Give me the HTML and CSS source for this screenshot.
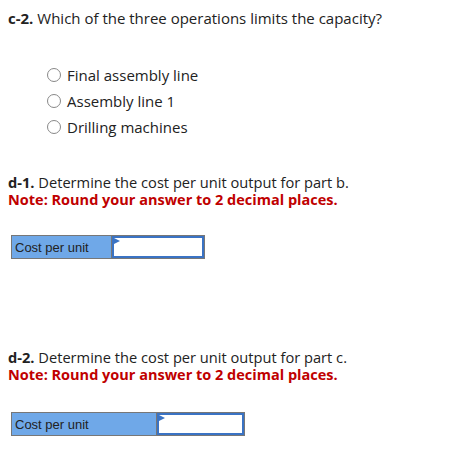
FILE: index.html
```html
<!DOCTYPE html>
<html>
<head>
<meta charset="utf-8">
<link rel="stylesheet" href="styles.css">
</head>
<body>
<div class="q">
  <p class="prompt"><b>c-2.</b> Which of the three operations limits the capacity?</p>
  <ul class="choices">
    <li><span class="radio"></span>Final assembly line</li>
    <li><span class="radio"></span>Assembly line 1</li>
    <li><span class="radio"></span>Drilling machines</li>
  </ul>
</div>
<div class="q q-d1">
  <p class="prompt"><b>d-1.</b> Determine the cost per unit output for part b.</p>
  <p class="note">Note: Round your answer to 2 decimal places.</p>
  <div class="answer a1">
    <div class="label">Cost per unit</div>
    <div class="input"><span class="flag"></span></div>
  </div>
</div>
<div class="q q-d2">
  <p class="prompt"><b>d-2.</b> Determine the cost per unit output for part c.</p>
  <p class="note">Note: Round your answer to 2 decimal places.</p>
  <div class="answer a2">
    <div class="label">Cost per unit</div>
    <div class="input"><span class="flag"></span></div>
  </div>
</div>
</body>
</html>
```
FILE: styles.css
```css
body {
  margin: 0;
  padding: 8px 0 0 8px;
  font-family: "Open Sans", "Liberation Sans", sans-serif;
  font-size: 15px;
  color: #222;
}
p { margin: 0; }
.prompt { line-height: 20px; }
.prompt b { font-weight: 700; }
.choices {
  list-style: none;
  margin: 0;
  padding: 34px 0 0 39px;
}
.choices li {
  display: flex;
  align-items: center;
  height: 26px;
}
.radio {
  width: 14px;
  height: 14px;
  border: 1px solid #888;
  border-radius: 50%;
  margin-right: 6px;
  box-sizing: border-box;
}
.q-d1 { padding-top: 34px; }
.q-d2 { padding-top: 90px; }
.q-d1 .prompt, .q-d2 .prompt {
  line-height: 17px;
  font-size: 14.65px;
}
.note {
  color: #c00000;
  font-weight: 700;
  font-size: 14.5px;
  line-height: 17px;
}
.answer {
  display: flex;
  box-sizing: border-box;
  margin: 27px 0 0 3px;
  border: 1px solid #777;
  height: 24px;
  font-family: "Liberation Sans", Arial, sans-serif;
  font-size: 13px;
}
.a1 { width: 194px; }
.a2 { width: 234px; margin-top: 29px; }
.label {
  box-sizing: border-box;
  background: #6fa8e8;
  border-right: 1px solid #777;
  padding: 0 0 0 3px;
  display: flex;
  align-items: center;
  color: #222;
}
.a1 .label { width: 100px; }
.a2 .label { width: 145px; }
.input {
  flex: 1;
  position: relative;
  background: #fff;
  border: 2px solid #3a73c4;
}
.flag {
  position: absolute;
  left: 0;
  top: 0;
  width: 0;
  height: 0;
  border-top: 3px solid transparent;
  border-bottom: 3px solid transparent;
  border-left: 6px solid #3a73c4;
}
```
